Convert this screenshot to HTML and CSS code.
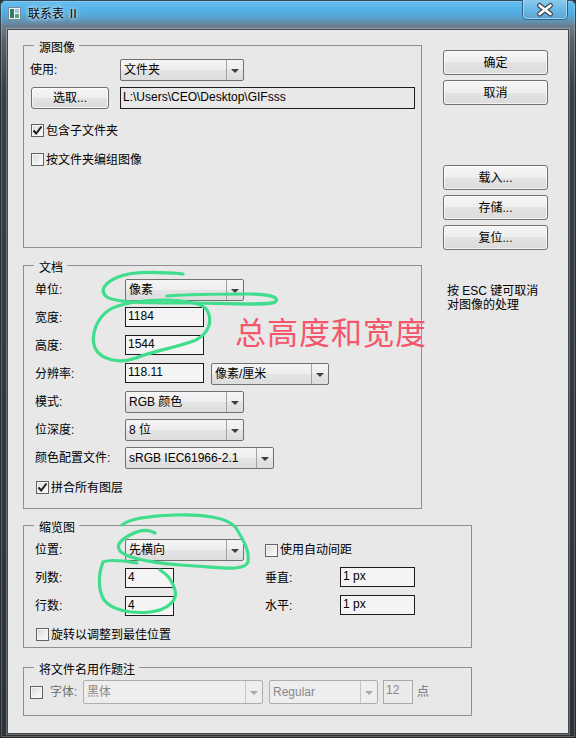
FILE: index.html
```html
<!DOCTYPE html>
<html lang="zh-CN">
<head>
<meta charset="utf-8">
<title>联系表 Ⅱ</title>
<link rel="stylesheet" href="styles.css">
</head>
<body>
<div class="window">
  <div class="titlebar">
    <svg class="app-icon" width="13" height="13" viewBox="0 0 13 13">
      <rect x="0.5" y="0.5" width="12" height="12" fill="#eef2f4" stroke="#7d8a96"/>
      <rect x="2" y="2" width="4" height="9" fill="#2f7d6c"/>
      <rect x="7" y="2" width="4" height="4" fill="#9fc7d8"/>
      <rect x="7" y="7" width="4" height="4" fill="#5aa37c"/>
    </svg>
    <span class="title">联系表 Ⅱ</span>
    <svg class="close" width="46" height="20" viewBox="0 0 46 20">
      <defs>
        <linearGradient id="closeFill" x1="0" y1="0" x2="0" y2="1">
          <stop offset="0" stop-color="#8bcbee"/>
          <stop offset="0.5" stop-color="#6ab8e6"/>
          <stop offset="1" stop-color="#5aa3d2"/>
        </linearGradient>
      </defs>
      <path d="M0.5,0 V15.5 Q0.5,19.5 4.5,19.5 H41.5 Q45.5,19.5 45.5,15.5 V0" fill="url(#closeFill)" stroke="#35607e"/>
      <path d="M1.5,0 V15.5 Q1.5,18.5 4.5,18.5 H41.5 Q44.5,18.5 44.5,15.5 V0" fill="none" stroke="#b9e0f5" stroke-opacity="0.7"/>
      <path d="M17.5,5.5 L28.5,14 M28.5,5.5 L17.5,14" stroke="#3c4650" stroke-width="5" stroke-linecap="round"/>
      <path d="M17.5,5.5 L28.5,14 M28.5,5.5 L17.5,14" stroke="#ffffff" stroke-width="2.6" stroke-linecap="round"/>
    </svg>
  </div>

  <div class="client">
    <div class="top">
      <div class="left-col">
        <fieldset class="group g1">
          <legend>源图像</legend>
          <div class="row first">
            <span class="lbl">使用:</span>
            <div class="combo w124"><span class="val">文件夹</span><span class="drop"></span></div>
          </div>
          <div class="row r-path">
            <button class="btn pick">选取...</button>
            <div class="path">L:\Users\CEO\Desktop\GIFsss</div>
          </div>
          <label class="check c-sub"><span class="box on"><svg width="11" height="11" viewBox="0 0 11 11"><path d="M1.5,5.5 L4.2,8.5 L9.5,1.5" fill="none" stroke="#1c1c1c" stroke-width="2"/></svg></span>包含子文件夹</label>
          <label class="check c-grp"><span class="box"></span>按文件夹编组图像</label>
        </fieldset>

        <fieldset class="group g2">
          <legend>文档</legend>
          <div class="row first">
            <span class="lbl">单位:</span>
            <div class="combo w119"><span class="val">像素</span><span class="drop"></span></div>
          </div>
          <div class="row">
            <span class="lbl">宽度:</span>
            <div class="field w79">1184</div>
          </div>
          <div class="row">
            <span class="lbl">高度:</span>
            <div class="field w79">1544</div>
          </div>
          <div class="row">
            <span class="lbl">分辨率:</span>
            <div class="field w79">118.11</div>
            <div class="combo w118 res-unit"><span class="val">像素/厘米</span><span class="drop"></span></div>
          </div>
          <div class="row">
            <span class="lbl">模式:</span>
            <div class="combo w119"><span class="val">RGB 颜色</span><span class="drop"></span></div>
          </div>
          <div class="row">
            <span class="lbl">位深度:</span>
            <div class="combo w119"><span class="val">8 位</span><span class="drop"></span></div>
          </div>
          <div class="row">
            <span class="lbl">颜色配置文件:</span>
            <div class="combo w149"><span class="val">sRGB IEC61966-2.1</span><span class="drop"></span></div>
          </div>
          <label class="check c-flat"><span class="box on"><svg width="11" height="11" viewBox="0 0 11 11"><path d="M1.5,5.5 L4.2,8.5 L9.5,1.5" fill="none" stroke="#1c1c1c" stroke-width="2"/></svg></span>拼合所有图层</label>
        </fieldset>
      </div>

      <div class="right-col">
        <button class="btn side">确定</button>
        <button class="btn side">取消</button>
        <button class="btn side load">载入...</button>
        <button class="btn side">存储...</button>
        <button class="btn side">复位...</button>
        <p class="hint">按 ESC 键可取消<br>对图像的处理</p>
      </div>
    </div>

    <fieldset class="group g3">
      <legend>缩览图</legend>
      <div class="row first">
        <span class="lbl">位置:</span>
        <div class="cell"><div class="combo w119"><span class="val">先横向</span><span class="drop"></span></div></div>
        <label class="check inline"><span class="box"></span>使用自动间距</label>
      </div>
      <div class="row">
        <span class="lbl">列数:</span>
        <div class="cell"><div class="field w49">4</div></div>
        <span class="lbl2">垂直:</span>
        <div class="field w75">1 px</div>
      </div>
      <div class="row">
        <span class="lbl">行数:</span>
        <div class="cell"><div class="field w49">4</div></div>
        <span class="lbl2">水平:</span>
        <div class="field w75">1 px</div>
      </div>
      <label class="check c-rot"><span class="box"></span>旋转以调整到最佳位置</label>
    </fieldset>

    <fieldset class="group g4">
      <legend>将文件名用作题注</legend>
      <div class="row caption">
        <span class="box"></span>
        <span class="lbl-font">字体:</span>
        <div class="combo off w180"><span class="val">黑体</span><span class="drop"></span></div>
        <div class="combo off w109 style"><span class="val">Regular</span><span class="drop"></span></div>
        <div class="field off w30 size">12</div>
        <span class="unit">点</span>
      </div>
    </fieldset>
  </div>

  <!-- hand-drawn markup layered over the dialog -->
  <svg class="marks" width="576" height="738" viewBox="0 0 576 738">
    <g fill="none" stroke="#3fdd8c" stroke-width="3.2" stroke-linecap="round" stroke-linejoin="round">
      <path d="M183,274 C160,272 132,271 118,277 C104,283 99,291 107,297 C117,303 150,303 190,303 C230,303 268,306 275,302 C281,297 268,294 250,294 C220,294 192,294 167,296"/>
      <path d="M135,302 C165,298 200,300 207,310 C213,321 209,333 196,340 C176,348 152,351 136,358 C119,364 101,360 95,348 C90,335 97,318 109,310 C117,305 125,304 135,302"/>
      <path d="M155,533 C148,529 140,530 132,534 C122,539 114,545 121,552 C131,560 160,564 195,566 C225,568 245,571 248,562 C250,550 242,538 236,528 C228,517 200,514 175,515 C150,516 130,518 122,525"/>
      <path d="M137,563 C125,561 110,559 103,562 C98,575 98,590 104,600 C112,610 130,614 150,612 C168,610 178,600 175,590 C172,580 168,575 160,570"/>
    </g>
  </svg>
  <div class="note">总高度和宽度</div>
</div>
</body>
</html>
```

FILE: styles.css
```css
* { box-sizing: border-box; }

html, body {
  margin: 0;
  padding: 0;
  background: #2b2f33;
}

body {
  font-family: "Liberation Sans", "Noto Sans CJK SC", sans-serif;
  font-size: 12px;
  line-height: 14px;
  color: #000;
}

/* ---------- window frame ---------- */
.window {
  position: relative;
  width: 576px;
  height: 738px;
  overflow: hidden;
  border-radius: 6px 6px 0 0;
  background: linear-gradient(180deg, #68beee 0, #50b0e6 12px, #5a9cc6 19px, #6b7d8d 26px, #59636d 40px, #3a3f44 90px, #2f3337 100%);
  box-shadow: inset 0 0 0 1px rgba(15, 20, 28, 0.7), inset 0 0 0 2px rgba(255, 255, 255, 0.22);
}

.titlebar {
  height: 29px;
  display: flex;
  align-items: flex-start;
}

.app-icon {
  flex: none;
  margin: 7px 0 0 8px;
}

.title {
  margin: 6px 0 0 7px;
  line-height: 16px;
  text-shadow: 0 0 6px rgba(255, 255, 255, 0.9), 0 0 3px rgba(255, 255, 255, 0.8);
}

.close {
  flex: none;
  margin-left: auto;
  margin-right: 8px;
}

/* ---------- client area ---------- */
.client {
  margin: 0 7px;
  height: 705px;
  background: #e8e8e8;
  border: 1px solid #44494e;
  box-shadow: 0 0 0 1px rgba(255, 255, 255, 0.28);
}

.top {
  display: flex;
  padding-left: 15px;
}

.left-col {
  width: 399px;
  flex: none;
}

.right-col {
  width: 105px;
  flex: none;
  margin-left: 21px;
  padding-top: 20px;
  display: flex;
  flex-direction: column;
}

/* ---------- group boxes ---------- */
.group {
  margin: 0;
  padding: 0;
  border: 1px solid #8f8f8f;
  min-width: 0;
}

.group legend {
  margin-left: 10px;
  padding: 6px 4px 0 5px;
  line-height: 14px;
}

.g1 { margin-top: 5px; padding-bottom: 81px; }
.g2 { margin-top: 7px; padding-bottom: 14px; }
.g3 { margin: 6px 0 0 15px; width: 449px; padding-bottom: 6px; }
.g4 { margin: 9px 0 0 15px; width: 449px; padding-bottom: 11px; }

.row {
  display: flex;
  align-items: center;
  height: 22px;
  margin-top: 6px;
  padding-left: 11px;
}

.row.first { margin-top: 4px; }

.g1 .row { padding-left: 6px; }
.g1 .r-path { padding-left: 7px; }

.lbl {
  flex: none;
  width: 90px;
}

.cell {
  flex: none;
  width: 140px;
  display: flex;
  align-items: center;
}

.lbl2 {
  flex: none;
  width: 75px;
}

/* ---------- controls ---------- */
.btn {
  font: inherit;
  color: #000;
  margin: 0;
  padding: 0;
  border: 1px solid #707070;
  border-radius: 3px;
  background: linear-gradient(180deg, #f6f6f6 0, #eeeeee 50%, #e3e3e3 50%, #dbdbdb 100%);
  box-shadow: inset 0 0 0 1px rgba(255, 255, 255, 0.7);
  line-height: 14px;
}

.pick {
  width: 78px;
  height: 22px;
}

.path {
  margin-left: 11px;
  width: 295px;
  height: 22px;
  border: 1px solid #1e1e1e;
  padding: 2px 0 0 2px;
  background: #e8e8e8;
  white-space: nowrap;
}

.side {
  width: 105px;
  height: 25px;
}

.side + .side { margin-top: 5px; }
.side.load { margin-top: 60px; }

.hint {
  margin: 34px 0 0 4px;
  line-height: 14px;
  white-space: nowrap;
}

.combo {
  flex: none;
  display: flex;
  height: 22px;
  border: 1px solid #707070;
  border-radius: 2px;
  background: linear-gradient(180deg, #f5f5f5 0, #eeeeee 50%, #e4e4e4 50%, #dddddd 100%);
}

.combo .val {
  flex: 1;
  padding-left: 3px;
  line-height: 20px;
  white-space: nowrap;
  overflow: hidden;
}

.combo .drop {
  flex: none;
  width: 17px;
  border-left: 1px solid #a3a3a3;
  display: flex;
  align-items: center;
  justify-content: center;
}

.combo .drop::after {
  content: "";
  border-left: 4px solid transparent;
  border-right: 4px solid transparent;
  border-top: 4px solid #3d3d3d;
  margin-top: 1px;
}

.res-unit { margin-left: 7px; }

.w119 { width: 119px; }
.w124 { width: 124px; }
.w118 { width: 118px; }
.w149 { width: 149px; }
.w180 { width: 180px; }
.w109 { width: 109px; }
.w79 { width: 79px; }
.w75 { width: 75px; }
.w49 { width: 49px; }
.w30 { width: 30px; }

.field {
  flex: none;
  align-self: flex-start;
  height: 20px;
  border: 1px solid #1c1c1c;
  background: #f4f4f4;
  padding: 1px 0 0 2px;
  line-height: 15px;
  white-space: nowrap;
}

/* ---------- check boxes ---------- */
.check {
  display: flex;
  align-items: center;
  height: 13px;
}

.box {
  flex: none;
  width: 13px;
  height: 13px;
  margin-right: 2px;
  border: 1px solid #626262;
  background: linear-gradient(135deg, #d9d9d9 0, #f0f0f0 60%, #fbfbfb 100%);
  box-shadow: inset 0 0 0 1px #f6f6f6;
  display: flex;
  align-items: center;
  justify-content: center;
}

.box svg { display: block; }

.c-sub { margin: 15px 0 0 7px; }
.c-grp { margin: 16px 0 0 7px; }
.c-flat { margin: 12px 0 0 12px; }
.c-rot { margin: 11px 0 0 12px; }
.check.inline { height: 13px; }

/* ---------- disabled caption row ---------- */
.row.caption {
  height: 24px;
  margin-top: 3px;
  padding-left: 6px;
}

.caption .box { margin-right: 7px; }

.lbl-font {
  flex: none;
  width: 33px;
  color: #6e6e6e;
}

.combo.off {
  height: 24px;
  border-color: #adadad;
  background: #eeeeee;
  color: #888;
}

.combo.off .val { line-height: 22px; }
.combo.off .drop { border-left-color: #c6c6c6; }
.combo.off .drop::after { border-top-color: #a8a8a8; }

.style { margin-left: 6px; }

.field.off {
  height: 24px;
  border-color: #a9a9a9;
  background: #eaeaea;
  color: #888;
  line-height: 17px;
}

.size { margin-left: 5px; }

.unit {
  margin-left: 4px;
  color: #6e6e6e;
}

/* ---------- markup layer ---------- */
.marks {
  position: absolute;
  left: 0;
  top: 0;
  pointer-events: none;
}

.note {
  position: absolute;
  left: 235px;
  top: 315px;
  font-family: "Noto Sans CJK SC", sans-serif;
  font-size: 31px;
  line-height: 31px;
  letter-spacing: 1px;
  color: #f5566b;
  white-space: nowrap;
}
```
